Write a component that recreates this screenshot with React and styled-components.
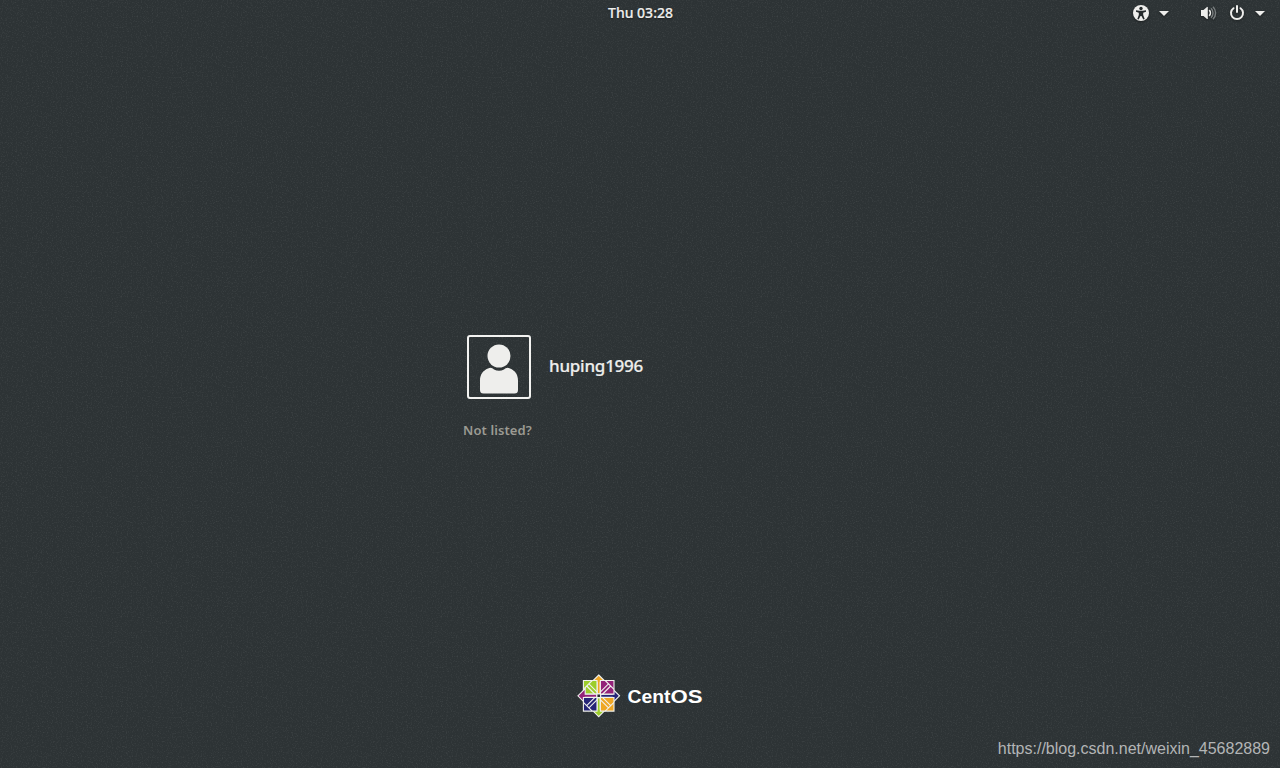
import React from "react";
import styled, { createGlobalStyle } from "styled-components";

const GlobalStyle = createGlobalStyle`
	* {
		box-sizing: border-box;
	}
	body {
		margin: 0;
		background: #2e3436;
		overflow: hidden;
	}
`;

const Screen = styled.div`
	position: relative;
	width: 1280px;
	height: 768px;
	display: flex;
	flex-direction: column;
	background-color: #2d3335;
	color: #eeeeec;
	font-family: "Noto Sans", "Open Sans", sans-serif;
	user-select: none;
`;

const NoiseLayer = styled.svg`
	position: absolute;
	inset: 0;
	width: 100%;
	height: 100%;
	pointer-events: none;
`;

const TopBar = styled.header`
	position: relative;
	height: 27px;
	flex: none;
	display: grid;
	grid-template-columns: 1fr auto 1fr;
	align-items: center;
`;

const Clock = styled.div`
	grid-column: 2;
	height: 27px;
	line-height: 26px;
	font-size: 14px;
	font-weight: 500;
	-webkit-text-stroke: 0.2px #eeeeec;
	text-shadow: 0 1px 2px rgba(0, 0, 0, 0.5);
	padding-left: 1px;
`;

const StatusArea = styled.div`
	justify-self: end;
	display: flex;
	align-items: center;
	height: 27px;
	padding: 0 15px 1px 0;
`;

const StatusGroup = styled.div`
	display: flex;
	align-items: center;
	margin-left: ${({ $offset }) => $offset || 0}px;
`;

const StatusIcon = styled.svg`
	display: block;
	flex: none;
	width: ${({ $width }) => $width || 16}px;
	height: 16px;
	margin-left: ${({ $gap }) => $gap || 0}px;
	fill: #eeeeec;
	overflow: visible;
	filter: drop-shadow(0 1px 1px rgba(0, 0, 0, 0.4));
`;

const LoginArea = styled.main`
	position: relative;
	flex: 1;
	padding: 308px 0 0 463px;
`;

const UserRow = styled.div`
	display: flex;
	align-items: center;
	padding-left: 4px;
`;

const Avatar = styled.div`
	width: 64px;
	height: 64px;
	border: 2px solid #f3f3f1;
	border-radius: 3px;
`;

const UserName = styled.div`
	margin-left: 18px;
	padding-bottom: 3px;
	font-size: 17px;
	font-weight: 500;
	letter-spacing: -0.25px;
	line-height: 24px;
	-webkit-text-stroke: 0.2px #eeeeec;
`;

const NotListed = styled.div`
	margin-top: 22px;
	font-size: 13px;
	font-weight: 600;
	letter-spacing: 0.1px;
	line-height: 18px;
	color: #9b9b93;
`;

const Footer = styled.footer`
	position: relative;
	flex: none;
	height: 96px;
	display: grid;
	grid-template-columns: 1fr auto 1fr;
`;

const Logo = styled.svg`
	grid-column: 2;
	display: block;
	width: 128px;
	height: 44px;
	margin-top: 2px;
`;

const LogoText = styled.text`
	fill: #ffffff;
	font-family: "Liberation Sans", Arial, sans-serif;
	font-size: 18.5px;
	font-weight: 700;
`;

const Watermark = styled.div`
	justify-self: end;
	align-self: end;
	padding: 0 10px 9px 0;
	font-family: "Liberation Sans", Arial, sans-serif;
	font-size: 16px;
	line-height: 20px;
	color: #b3b5b6;
`;

function Noise() {
	return (
		<NoiseLayer aria-hidden="true">
			<filter id="noise" x="0" y="0" width="100%" height="100%">
				<feTurbulence type="fractalNoise" baseFrequency="0.8" numOctaves="2" seed="4" />
				<feColorMatrix values="0 0 0 0 1  0 0 0 0 1  0 0 0 0 1  0.2 0 0 0 -0.1" />
			</filter>
			<rect width="100%" height="100%" filter="url(#noise)" />
		</NoiseLayer>
	);
}

function Caret({ gap }) {
	return (
		<StatusIcon $width={10} $gap={gap} viewBox="0 0 10 16">
			<path d="M0 6h10L5 11z" />
		</StatusIcon>
	);
}

function AccessibilityIcon() {
	return (
		<StatusIcon viewBox="0 0 16 16">
			<circle cx="8" cy="8" r="8" />
			<circle cx="8" cy="3.5" r="1.7" fill="#24292b" />
			<path
				fill="#24292b"
				d="M3 5.200l3.300.6h3.400l3.300-.6v1.500l-2.800 1v2.200l1.500 4.100-1.400.6L8.500 11h-1l-1.800 3.600-1.400-.6 1.500-4.100V7.700L3 6.700z"
			/>
		</StatusIcon>
	);
}

function VolumeIcon() {
	return (
		<StatusIcon viewBox="0 0 16 16">
			<path d="M1 5h2.500L7 2h.8v12H7l-3.500-3H1z" />
			<path d="M9.200 5.200a4 4 0 0 1 0 5.600" fill="none" stroke="#eeeeec" strokeWidth="1.700" />
			<path
				d="M11 3.300a6.500 6.500 0 0 1 0 9.400M13 1.700a9 9 0 0 1 0 12.600"
				fill="none"
				stroke="#777c7d"
				strokeWidth="1.500"
			/>
		</StatusIcon>
	);
}

function PowerIcon() {
	return (
		<StatusIcon $gap={13} viewBox="0 0 16 16">
			<path
				d="M4.500 3.200a6 6 0 1 0 7 0M8 1v6"
				fill="none"
				stroke="#eeeeec"
				strokeWidth="2"
				strokeLinecap="round"
			/>
		</StatusIcon>
	);
}

const quadrants = [
	{ angle: 0, square: "#9ccd2a", arrow: "#efa724" },
	{ angle: 90, square: "#932279", arrow: "#262577" },
	{ angle: 180, square: "#efa724", arrow: "#9ccd2a" },
	{ angle: 270, square: "#262577", arrow: "#932279" }
];

function CentosLogo() {
	return (
		<Logo viewBox="0 0 128 44">
			<g transform="translate(22.700 21.800)" stroke="#f0f1ed" strokeWidth="1.100">
				{quadrants.map(({ angle, square, arrow }) => (
					<g key={angle} transform={`rotate(${angle})`}>
						<path d="M0-20.800L7.300-13.500H1.500V-2h-3V-13.500h-5.800z" fill={arrow} />
						<path d="M-15.300-15.300H-1.700V-1.700H-15.300z" fill={square} />
						<path d="M-15.300-6.500l8.800-8.800M-12-9.800l8.500 8.500M-9.800-12l8.500 8.500" fill="none" />
					</g>
				))}
				<path d="M-1.800-1.800h3.600v3.600h-3.600z" fill="#24292b" />
			</g>
			<LogoText x="51.500" y="28.500" textLength="43" lengthAdjust="spacingAndGlyphs">
				Cent
			</LogoText>
			<LogoText x="94.500" y="28.500" textLength="32" lengthAdjust="spacingAndGlyphs">
				OS
			</LogoText>
		</Logo>
	);
}

function App() {
	return (
		<>
			<GlobalStyle />
			<Screen>
				<Noise />
				<TopBar>
					<Clock>Thu 03:28</Clock>
					<StatusArea>
						<StatusGroup>
							<AccessibilityIcon />
							<Caret gap={10} />
						</StatusGroup>
						<StatusGroup $offset={31}>
							<VolumeIcon />
							<PowerIcon />
							<Caret gap={10} />
						</StatusGroup>
					</StatusArea>
				</TopBar>
				<LoginArea>
					<UserRow>
						<Avatar>
							<svg width="60" height="60" viewBox="0 0 60 60" fill="#eeeeec">
								<circle cx="30" cy="19" r="11.500" />
								<path d="M19 31.500c3-1.500 4-.5 6 1q5 2.500 10 0c2-1.500 3-2.500 6-1 5 2 8 6 8 12V53q0 3.500-3.500 3.500h-31Q11 56.500 11 53v-9.500c0-6 3-10 8-12z" />
							</svg>
						</Avatar>
						<UserName>huping1996</UserName>
					</UserRow>
					<NotListed>Not listed?</NotListed>
				</LoginArea>
				<Footer>
					<CentosLogo />
					<Watermark>https://blog.csdn.net/weixin_45682889</Watermark>
				</Footer>
			</Screen>
		</>
	);
}

export default App;
